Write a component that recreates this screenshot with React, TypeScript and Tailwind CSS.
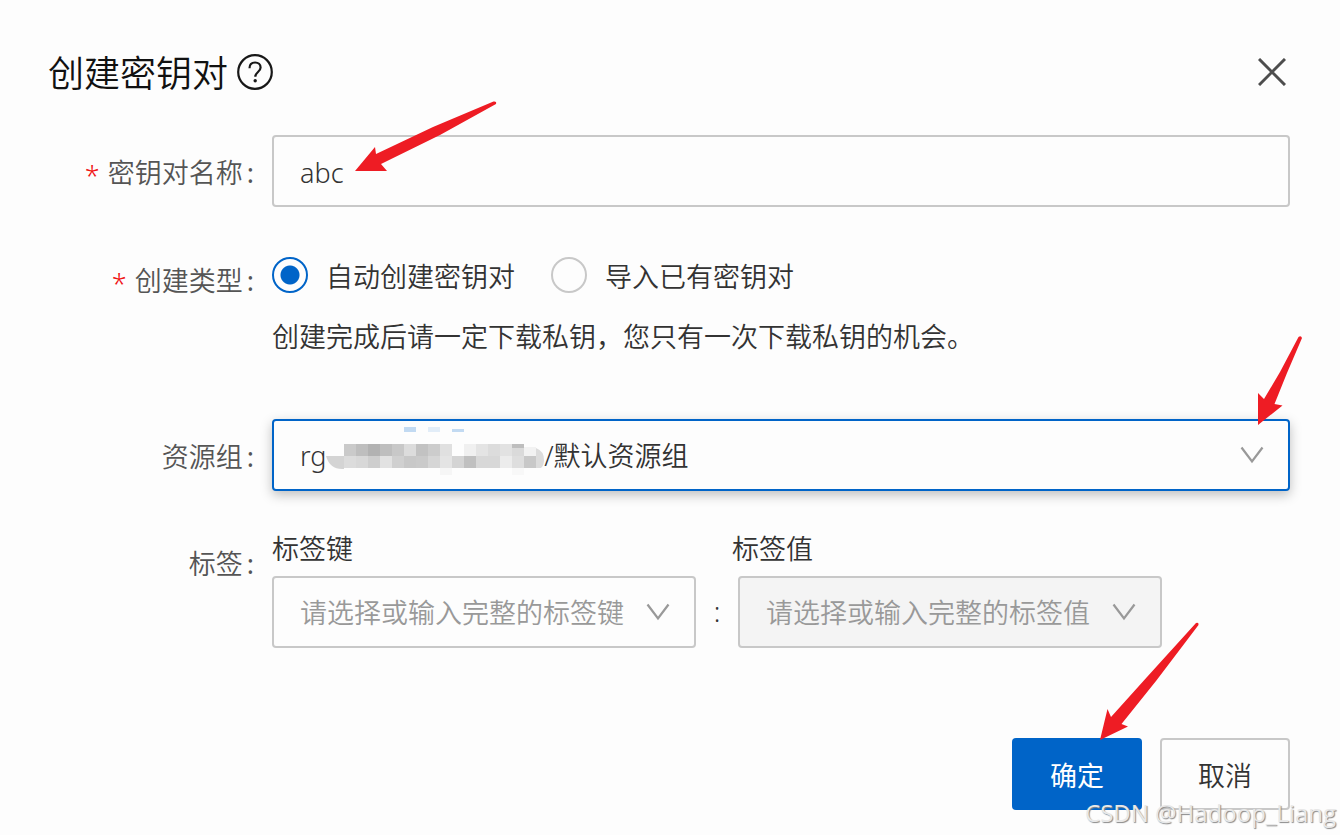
import { useState } from "react";
import type { ReactNode } from "react";

type FieldProps = {
  label: string;
  htmlFor?: string;
  required?: boolean;
  labelClass?: string;
  children: ReactNode;
};

// mosaic cells over the resource group id: x, y, width, height, fill
const mosaic: [number, number, number, number, string][] = [
  [78, 0, 12, 5, "#c2daf2"],
  [102, 0, 12, 5, "#e2edf8"],
  [126, 2, 12, 3, "#c2daf2"],
  [18, 17, 12, 12, "#cacaca"],
  [30, 17, 12, 12, "#bebebe"],
  [42, 17, 12, 12, "#b2b2b2"],
  [54, 17, 12, 12, "#bebebe"],
  [66, 17, 12, 12, "#c8c8c8"],
  [78, 17, 12, 12, "#dcdcdc"],
  [90, 17, 12, 12, "#c2c2c2"],
  [102, 17, 12, 12, "#cccccc"],
  [114, 17, 12, 12, "#e0e0e0"],
  [138, 17, 12, 12, "#f0f0f0"],
  [150, 17, 12, 12, "#e4e4e4"],
  [162, 17, 12, 12, "#dcdcdc"],
  [174, 17, 12, 12, "#e2e2e2"],
  [186, 17, 12, 4, "#bebebe"],
  [186, 21, 12, 8, "#dadada"],
  [198, 20, 12, 9, "#f2f2f2"],
  [30, 29, 12, 12, "#d8d8d8"],
  [18, 29, 12, 12, "#dcdcdc"],
  [42, 29, 12, 12, "#cecece"],
  [54, 29, 12, 12, "#e2e2e2"],
  [66, 29, 12, 12, "#d0d0d0"],
  [78, 29, 12, 12, "#c8c8c8"],
  [90, 29, 12, 12, "#cacaca"],
  [102, 29, 12, 12, "#d6d6d6"],
  [114, 29, 12, 12, "#e4e4e4"],
  [126, 29, 12, 12, "#d4d4d4"],
  [138, 29, 12, 12, "#c0c0c0"],
  [150, 29, 24, 12, "#d8d8d8"],
  [174, 29, 12, 12, "#ececec"],
  [186, 29, 12, 12, "#dedede"],
  [198, 29, 12, 12, "#c8c8c8"],
  [114, 41, 12, 7, "#f6f6f6"],
  [186, 41, 12, 7, "#f8f8f8"],
];

const resourceGroup = "rg" + "\u00a0".repeat(31) + "/默认资源组";

function Field({ label, htmlFor, required, labelClass, children }: FieldProps) {
  return (
    <div className="flex gap-4">
      <div className={`w-52 shrink-0 text-right leading-9 text-[#555] whitespace-nowrap pr-[2px] ${labelClass ?? ""}`}>
        {required && <span className="inline-block align-middle leading-none text-[#f01414] mr-2">*</span>}
        <label htmlFor={htmlFor}>{label}</label>
        <span className="ml-1 font-normal">:</span>
      </div>
      <div className="relative flex-1 min-w-0">{children}</div>
    </div>
  );
}

function Chevron({ className }: { className: string }) {
  return (
    <svg viewBox="0 0 24 18" className={`absolute w-6 h-[18px] pointer-events-none ${className}`} fill="none" stroke="#999" strokeWidth="2.2">
      <path d="M1.500 1.500 12 15.500 22.500 1.500" />
    </svg>
  );
}

export default function App() {
  const [name, setName] = useState("abc");
  const [type, setType] = useState("auto");

  const radio =
    "appearance-none w-9 h-9 shrink-0 rounded-full border-2 border-[#c8c8c8] checked:border-[#0064c8] checked:bg-[radial-gradient(circle,#0064c8_9px,transparent_10px)]";
  const box = "block w-full h-[72px] px-[26px] pt-[2px] border-2 rounded appearance-none outline-none";

  return (
    <div className="relative min-h-screen bg-[#fdfdfd] pl-12 pr-[50px] pt-12 text-[27px] text-[#333] font-[350] font-['Noto_Sans','Noto_Sans_CJK_SC',sans-serif]">
      <header className="flex items-center justify-between h-12">
        <div className="flex items-center gap-2">
          <h1 className="pt-1 text-[36px] leading-[48px] text-[#111]">创建密钥对</h1>
          <svg viewBox="0 0 38 38" className="w-[38px] h-[38px]" fill="none" stroke="#181818" strokeWidth="2.2">
            <circle cx="19" cy="19" r="16.800" />
            <path d="M13.500 15.200c0-3.600 2.300-5.700 5.600-5.700 3.200 0 5.500 2 5.500 5 0 4.500-5.300 4.600-5.300 9.200" />
            <circle cx="19.200" cy="27.800" r="1.700" fill="#181818" stroke="none" />
          </svg>
        </div>
        <button type="button" aria-label="关闭" className="p-1">
          <svg viewBox="0 0 28 28" className="w-7 h-7" fill="none" stroke="#4d4d4d" strokeWidth="3">
            <path d="M1 1 27 27M27 1 1 27" />
          </svg>
        </button>
      </header>

      <form className="mt-[39px]" onSubmit={(e) => e.preventDefault()}>
        <Field label="密钥对名称" htmlFor="name" required labelClass="pt-5">
          <input
            id="name"
            value={name}
            onChange={(e) => setName(e.target.value)}
            className={`${box} border-[#c8c8c8]`}
          />
          <svg viewBox="0 0 142 72" className="absolute left-[83px] -top-[35px] w-[142px] h-[72px] pointer-events-none" fill="#ee1c24">
            <path d="M0 71 20 47 21 54 78 27 138.500 1.500Q142 1 141 4L85 35 26 64 32 71Z" />
          </svg>
        </Field>

        <div className="mt-[50px]">
          <Field label="创建类型" required labelClass="pt-1.5">
            <div className="flex items-center gap-9 h-9">
              <label className="flex items-center gap-[18px] leading-9">
                <input type="radio" name="type" className={radio} checked={type === "auto"} onChange={() => setType("auto")} />
                <span className="pt-1">自动创建密钥对</span>
              </label>
              <label className="flex items-center gap-[18px] leading-9">
                <input type="radio" name="type" className={radio} checked={type === "import"} onChange={() => setType("import")} />
                <span className="pt-1">导入已有密钥对</span>
              </label>
            </div>
            <p className="mt-[26px] leading-9">创建完成后请一定下载私钥，您只有一次下载私钥的机会。</p>
          </Field>
        </div>

        <div className="mt-16">
          <Field label="资源组" htmlFor="group" labelClass="pt-5">
            <select id="group" className={`${box} border-[#0064c8] bg-[#fdfdfd] shadow-[0_4px_12px_rgba(0,0,0,0.25)]`}>
              <option>{resourceGroup}</option>
            </select>
            <svg viewBox="0 0 220 48" className="absolute left-[54px] top-2 w-[220px] h-12 pointer-events-none">
              <path d="M0 29H18V42Q4 43 0 29Z" fill="#d4d4d4" />
              <g shapeRendering="crispEdges">
                {mosaic.map(([x, y, w, h, fill]) => (
                  <rect key={`${x}-${y}`} x={x} y={y} width={w} height={h} fill={fill} />
                ))}
              </g>
              <path d="M210 21Q218 24 218 33 218 38 215 41H210Z" fill="#dcdcdc" />
            </svg>
            <Chevron className="right-[26px] top-[27px]" />
            <svg viewBox="0 0 48 92" className="absolute -right-[14px] -top-[85px] w-12 h-[92px] pointer-events-none" fill="#ee1c24">
              <path d="M2 91V59L8 65 24 38 42.500 3Q45 1 46 4L31 39 18.500 70 26.500 71.500Z" />
            </svg>
          </Field>
        </div>

        <div className="mt-10">
          <Field label="标签" labelClass="pt-[15px]">
            <div className="flex">
              <div className="w-[424px]">
                <label htmlFor="tag-key" className="block leading-9">标签键</label>
                <div className="relative mt-[9px]">
                  <select id="tag-key" className={`${box} border-[#c8c8c8] text-[#999]`}>
                    <option>请选择或输入完整的标签键</option>
                  </select>
                  <Chevron className="right-[26px] top-[27px]" />
                </div>
              </div>
              <span className="w-[42px] text-center leading-[72px] self-end">:</span>
              <div className="w-[424px]">
                <label htmlFor="tag-value" className="block leading-9 -ml-1.5">标签值</label>
                <div className="relative mt-[9px]">
                  <select id="tag-value" disabled className={`${box} border-[#c8c8c8] bg-[#f4f4f4] text-[#999] opacity-100`}>
                    <option>请选择或输入完整的标签值</option>
                  </select>
                  <Chevron className="right-[26px] top-[27px]" />
                </div>
              </div>
            </div>
          </Field>
        </div>

        <footer className="flex justify-end gap-[18px] mt-[90px] pb-6">
          <div className="relative">
            <button type="submit" className="w-[130px] h-[72px] pt-1 rounded bg-[#0064c8] text-white font-normal">确定</button>
            <svg viewBox="0 0 102 120" className="absolute left-[86px] -top-[117px] w-[102px] h-[120px] pointer-events-none" fill="#ee1c24">
              <path d="M2 119 9.500 88 13 96 49 56 98 2Q101 1 100.500 4L58 60 23.500 103 30 105.500Z" />
            </svg>
          </div>
          <button type="button" className="w-[130px] h-[72px] pt-1 rounded border-2 border-[#c8c8c8]">取消</button>
        </footer>
      </form>

      <div className="absolute right-1 bottom-1 text-[24px] leading-9 font-['Open_Sans',sans-serif] font-normal text-[#e8e8e8] [text-shadow:1px_1px_1px_#888] pointer-events-none">
        CSDN @Hadoop_Liang
      </div>
    </div>
  );
}
